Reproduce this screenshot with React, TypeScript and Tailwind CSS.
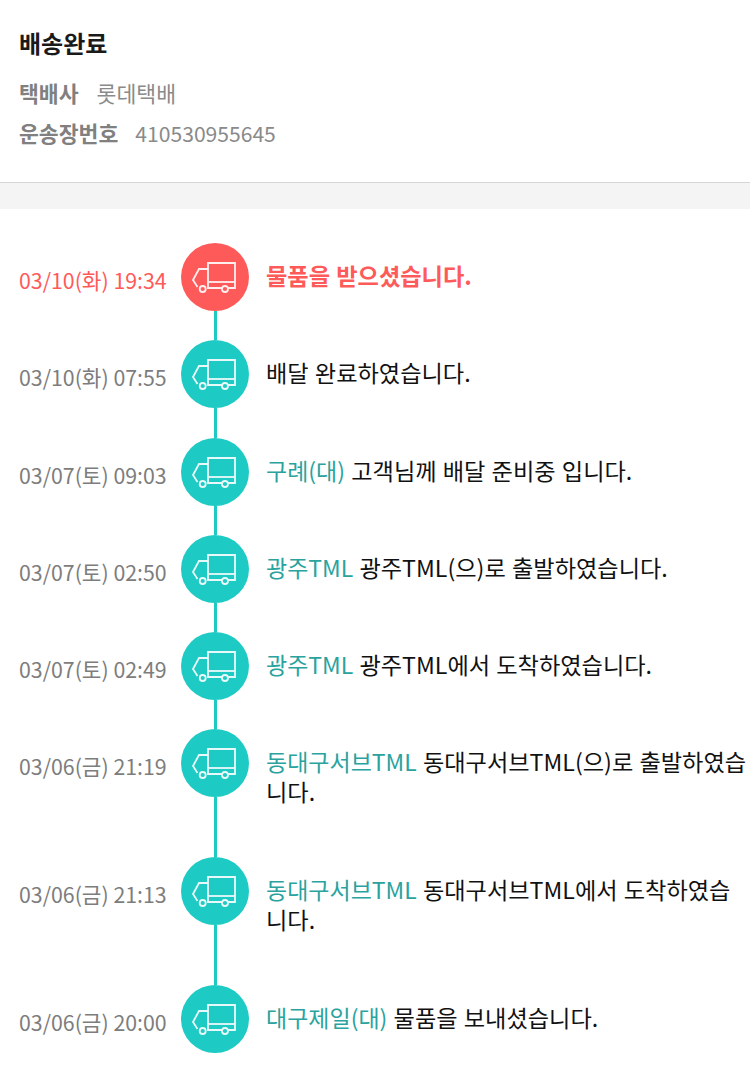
const font = { fontFamily: '"Noto Sans CJK KR", "Noto Sans", sans-serif' };

type Step = {
  date: string;
  place?: string;
  text: string;
  height: string;
  active?: boolean;
  last?: boolean;
};

const steps: Step[] = [
  { date: "03/10(화) 19:34", text: "물품을 받으셨습니다.", height: "h-[97px]", active: true },
  { date: "03/10(화) 07:55", text: "배달 완료하였습니다.", height: "h-[98px]" },
  { date: "03/07(토) 09:03", place: "구례(대)", text: " 고객님께 배달 준비중 입니다.", height: "h-[97px]" },
  { date: "03/07(토) 02:50", place: "광주TML", text: " 광주TML(으)로 출발하였습니다.", height: "h-[97px]" },
  { date: "03/07(토) 02:49", place: "광주TML", text: " 광주TML에서 도착하였습니다.", height: "h-[97px]" },
  { date: "03/06(금) 21:19", place: "동대구서브TML", text: " 동대구서브TML(으)로 출발하였습니다.", height: "h-[128px]" },
  { date: "03/06(금) 21:13", place: "동대구서브TML", text: " 동대구서브TML에서 도착하였습니다.", height: "h-[128px]" },
  { date: "03/06(금) 20:00", place: "대구제일(대)", text: " 물품을 보내셨습니다.", height: "h-[82px]", last: true },
];

function Truck() {
  return (
    <svg width="44" height="31" viewBox="1 0 44 31" fill="none" stroke="#fff" strokeWidth="1.8" className="overflow-visible opacity-90">
      <path d="M30 26H16V1h27v25h-7" />
      <path d="M16 20h27" />
      <path d="M16 7H7L1 18l4.500 7" />
      <circle cx="10.700" cy="27" r="3" />
      <circle cx="33" cy="27" r="3" />
    </svg>
  );
}

export default function App() {
  return (
    <div className="w-[750px] bg-white text-[#111]" style={font}>
      <section className="h-[183px] border-b border-[#d5d5d5] px-[19px] pt-[25px]">
        <h1 className="text-[24px] leading-[36px] font-bold text-[#1a1a1a]">배송완료</h1>
        <p className="mt-[12px] flex gap-[18px] text-[21.600px] leading-[40px] text-[#8a8a8a]">
          <b className="font-bold text-[#808080]">택배사</b>
          <span>롯데택배</span>
        </p>
        <p className="flex gap-[17px] text-[21.600px] leading-[40px] text-[#8a8a8a]">
          <b className="font-bold text-[#808080]">운송장번호</b>
          <span className="text-[21.100px]">410530955645</span>
        </p>
      </section>
      <div className="h-[26px] bg-[#f4f4f4]" />
      <ol className="pt-[34px]">
        {steps.map((s) => (
          <li key={s.date} className={`flex ${s.height}`}>
            <span
              className={`mt-[21px] w-[181px] shrink-0 pl-[19px] text-[21.300px] leading-[32px] whitespace-nowrap ${
                s.active ? "text-[#ff5a5a]" : "text-[#7d7d7d]"
              }`}
            >
              {s.date}
            </span>
            <div className="flex w-[68px] shrink-0 flex-col items-center">
              <div
                className={`flex h-[68px] w-[68px] shrink-0 items-center justify-center rounded-full ${
                  s.active ? "bg-[#ff5a5a]" : "bg-[#1dcac4]"
                }`}
              >
                <Truck />
              </div>
              {!s.last && <div className="w-[3px] flex-1 bg-[#1dcac4]" />}
            </div>
            <p
              className={`mt-[17px] ml-[17px] w-[483px] text-[23.200px] leading-[30px] [word-spacing:1px] break-all ${
                s.active ? "font-bold text-[#ff5a5a]" : ""
              }`}
            >
              {s.place && <span className="text-[23px] text-[#2aa39e]">{s.place}</span>}
              {s.text}
            </p>
          </li>
        ))}
      </ol>
    </div>
  );
}
